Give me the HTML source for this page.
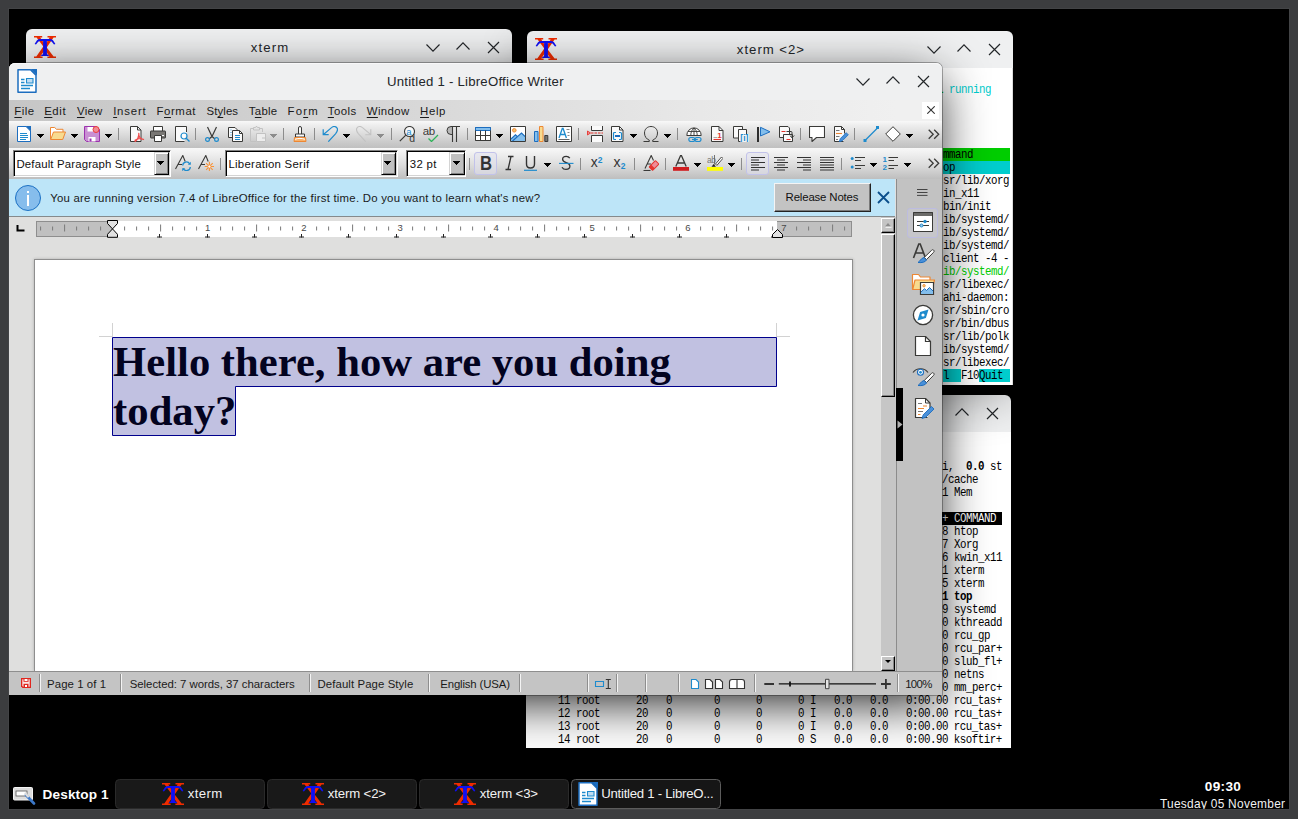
<!DOCTYPE html>
<html><head><meta charset="utf-8"><title>Desktop</title><style>
*{box-sizing:border-box;margin:0;padding:0}
html,body{width:1298px;height:819px;overflow:hidden;background:#3c3d3f}
body{font-family:"Liberation Sans",sans-serif;position:relative}
.abs{position:absolute}
#screen{position:absolute;left:9px;top:9px;width:1280px;height:800px;background:#000;overflow:hidden;box-shadow:0 0 0 1px #434446}
#root{position:absolute;left:-9px;top:-9px;width:1298px;height:819px}
.t{position:absolute;white-space:pre}
.t u{text-decoration:underline;text-underline-offset:1.500px;text-decoration-thickness:1px}
.tb{background:#eff0f1;border-radius:6px 6px 0 0}
.m{position:absolute;font:400 10.8px/13px 'Liberation Mono',monospace;letter-spacing:-.481px;white-space:pre;transform:translateY(.6px) scaleY(1.130);transform-origin:0 50%}
.mb{font-weight:700}
#lo{background:#dfdfdf;border-radius:6px 6px 0 0;box-shadow:0 0 0 1px rgba(0,0,0,.3),0 12px 50px -5px rgba(0,0,0,.9)}
.cb{background:#fff;border:1px solid;border-color:#808080 #fff #fff #808080;box-shadow:inset 1px 1px 0 #000,inset -1px -1px 0 #d4d4d4}
.cbb{background:#c0c0c0;border:1px solid;border-color:#d4d4d4 #000 #000 #d4d4d4;box-shadow:inset 1px 1px 0 #fff,inset -1px -1px 0 #808080}
.act{background:rgba(226,226,238,.55);border:1px solid #c2c2ea;border-radius:3px}
.act2{background:rgba(214,214,230,.22);border:1px solid #bcbce0;border-radius:3px}
.sbb{background:#c4c4c4;border:1px solid;border-color:#fff #000 #000 #fff;box-shadow:inset -1px -1px 0 #858585}
.tk{background:#191919;border:1px solid #2a2a2a;border-radius:4.500px}
.tka{background:#161616;border-color:#5c5c5c}
</style></head><body><div id="screen"><div id="root">
<!-- xterm 1 -->
<div class="abs tb" style="left:26px;top:29px;width:486px;height:37px"></div><svg class="abs" style="left:34.0px;top:36.0px" width="22" height="22" viewBox="0 0 22 22"><g fill="#f02c00"><path d="M0 0h8.2v1.6h-2l4.9 7.2 4.6-7.2h-2.2V0H22v1.6h-2.4l-6.9 9.9 6.9 8.9H22V22h-8.6v-1.6h2.1l-4.6-6.6-4.6 6.6h2.3V22H0v-1.6h2.3l7-9.8L2.6 1.6H0z"/></g><path fill="#1010f4" d="M.6 8L3 4.300Q4.400 3 6 3H16Q17.600 3 19 4.300L21.400 8 20 8.400 17.800 5.800Q17 5 15.800 5H12.900V17.600Q12.900 18.800 14.800 19V20H7.200V19Q9.100 18.800 9.100 17.600V5H6.200Q5 5 4.200 5.800L2 8.400Z"/></svg><span class="t" style="left:250.85px;top:41px;font:400 13.200px/1em 'Liberation Sans',sans-serif;color:#232629;letter-spacing:1.126px;">xterm</span><svg class="abs" style="left:0;top:0;overflow:visible" width="1" height="1"><g fill="none" stroke="#232629" stroke-width="1.15"><polyline points="426.5,44.5 433.0,51.1 439.5,44.5" /><polyline points="456.5,49.5 463.0,42.9 469.5,49.5" /><path d="M488.0 42.0L499.0 53.0M499.0 42.0L488.0 53.0"/></g></svg>
<!-- xterm 3 -->
<div class="abs tb" style="left:526px;top:395px;width:485px;height:37px"></div><svg class="abs" style="left:534.0px;top:402.0px" width="22" height="22" viewBox="0 0 22 22"><g fill="#f02c00"><path d="M0 0h8.2v1.6h-2l4.9 7.2 4.6-7.2h-2.2V0H22v1.6h-2.4l-6.9 9.9 6.9 8.9H22V22h-8.6v-1.6h2.1l-4.6-6.6-4.6 6.6h2.3V22H0v-1.6h2.3l7-9.8L2.6 1.6H0z"/></g><path fill="#1010f4" d="M.6 8L3 4.300Q4.400 3 6 3H16Q17.600 3 19 4.300L21.400 8 20 8.400 17.800 5.800Q17 5 15.800 5H12.900V17.600Q12.900 18.800 14.800 19V20H7.200V19Q9.100 18.800 9.100 17.600V5H6.200Q5 5 4.200 5.800L2 8.400Z"/></svg><svg class="abs" style="left:0;top:0;overflow:visible" width="1" height="1"><g fill="none" stroke="#232629" stroke-width="1.15"><polyline points="925.5,410.5 932.0,417.1 938.5,410.5" /><polyline points="955.5,415.5 962.0,408.9 968.5,415.5" /><path d="M987.0 408.0L998.0 419.0M998.0 408.0L987.0 419.0"/></g></svg><div class="abs" style="left:526px;top:432px;width:485px;height:316px;background:#fff"></div><span class="m" style="left:942px;top:460px;color:#000">i,</span><span class="m mb" style="left:966px;top:460px;color:#000">0.0</span><span class="m" style="left:990px;top:460px;color:#000">st</span><span class="m" style="left:942px;top:473px;color:#000">/cache</span><span class="m" style="left:942px;top:486px;color:#000">1 Mem</span><div class="abs" style="left:942px;top:512px;width:60px;height:13px;background:#000"></div><span class="m" style="left:942px;top:512px;color:#fff">+ COMMAND</span><span class="m" style="left:942px;top:525px;color:#000">8 htop</span><span class="m" style="left:942px;top:538px;color:#000">7 Xorg</span><span class="m" style="left:942px;top:551px;color:#000">6 kwin_x11</span><span class="m" style="left:942px;top:564px;color:#000">1 xterm</span><span class="m" style="left:942px;top:577px;color:#000">5 xterm</span><span class="m mb" style="left:942px;top:590px;color:#000">1 top</span><span class="m" style="left:942px;top:603px;color:#000">9 systemd</span><span class="m" style="left:942px;top:616px;color:#000">0 kthreadd</span><span class="m" style="left:942px;top:629px;color:#000">0 rcu_gp</span><span class="m" style="left:942px;top:642px;color:#000">0 rcu_par+</span><span class="m" style="left:942px;top:655px;color:#000">0 slub_fl+</span><span class="m" style="left:942px;top:668px;color:#000">0 netns</span><span class="m" style="left:942px;top:681px;color:#000">0 mm_perc+</span><span class="m" style="left:528px;top:694px;color:#000">     11 root      20   0       0      0      0 I   0.0   0.0   0:00.00 rcu_tas+</span><span class="m" style="left:528px;top:707px;color:#000">     12 root      20   0       0      0      0 I   0.0   0.0   0:00.00 rcu_tas+</span><span class="m" style="left:528px;top:720px;color:#000">     13 root      20   0       0      0      0 I   0.0   0.0   0:00.00 rcu_tas+</span><span class="m" style="left:528px;top:733px;color:#000">     14 root      20   0       0      0      0 S   0.0   0.0   0:00.90 ksoftir+</span>
<!-- xterm 2 -->
<div class="abs" style="left:527px;top:31px;width:486px;height:354px;border-radius:6px 6px 0 0;box-shadow:0 12px 50px -5px rgba(0,0,0,.45)"></div><div class="abs tb" style="left:527px;top:31px;width:486px;height:37px"></div><svg class="abs" style="left:535.0px;top:38.0px" width="22" height="22" viewBox="0 0 22 22"><g fill="#f02c00"><path d="M0 0h8.2v1.6h-2l4.9 7.2 4.6-7.2h-2.2V0H22v1.6h-2.4l-6.9 9.9 6.9 8.9H22V22h-8.6v-1.6h2.1l-4.6-6.6-4.6 6.6h2.3V22H0v-1.6h2.3l7-9.8L2.6 1.6H0z"/></g><path fill="#1010f4" d="M.6 8L3 4.300Q4.400 3 6 3H16Q17.600 3 19 4.300L21.400 8 20 8.400 17.800 5.800Q17 5 15.800 5H12.900V17.600Q12.900 18.800 14.800 19V20H7.200V19Q9.100 18.800 9.100 17.600V5H6.200Q5 5 4.200 5.800L2 8.400Z"/></svg><span class="t" style="left:736.85px;top:43px;font:400 13.200px/1em 'Liberation Sans',sans-serif;color:#232629;letter-spacing:0.982px;">xterm &lt;2&gt;</span><svg class="abs" style="left:0;top:0;overflow:visible" width="1" height="1"><g fill="none" stroke="#232629" stroke-width="1.15"><polyline points="927.5,46.5 934.0,53.1 940.5,46.5" /><polyline points="957.5,51.5 964.0,44.9 970.5,51.5" /><path d="M989.0 44.0L1000.0 55.0M1000.0 44.0L989.0 55.0"/></g></svg><div class="abs" style="left:527px;top:68px;width:486px;height:317px;background:#fff;border-right:1px solid #dcdcdc"></div><span class="m mb" style="left:937px;top:83px;color:#00cd00">1</span><span class="m" style="left:949px;top:83px;color:#00cdcd">running</span><div class="abs" style="left:943px;top:148px;width:67px;height:13px;background:#00cd00"></div><span class="m" style="left:943px;top:148px;color:#000">mmand</span><div class="abs" style="left:943px;top:161px;width:67px;height:13px;background:#00cdcd"></div><span class="m" style="left:943px;top:161px;color:#000">op</span><span class="m" style="left:943px;top:174px;color:#000">sr/lib/xorg</span><span class="m" style="left:943px;top:187px;color:#000">in_x11</span><span class="m" style="left:943px;top:200px;color:#000">bin/init</span><span class="m" style="left:943px;top:213px;color:#000">ib/systemd/</span><span class="m" style="left:943px;top:226px;color:#000">ib/systemd/</span><span class="m" style="left:943px;top:239px;color:#000">ib/systemd/</span><span class="m" style="left:943px;top:252px;color:#000">client -4 -</span><span class="m" style="left:943px;top:265px;color:#00cd00">ib/systemd/</span><span class="m" style="left:943px;top:278px;color:#000">sr/libexec/</span><span class="m" style="left:943px;top:291px;color:#000">ahi-daemon:</span><span class="m" style="left:943px;top:304px;color:#000">sr/sbin/cro</span><span class="m" style="left:943px;top:317px;color:#000">sr/bin/dbus</span><span class="m" style="left:943px;top:330px;color:#000">sr/lib/polk</span><span class="m" style="left:943px;top:343px;color:#000">ib/systemd/</span><span class="m" style="left:943px;top:356px;color:#000">sr/libexec/</span><div class="abs" style="left:943px;top:369px;width:18px;height:13px;background:#00cdcd"></div><span class="m" style="left:943px;top:369px;color:#000">l</span><span class="m" style="left:961px;top:369px;color:#000">F10</span><div class="abs" style="left:979px;top:369px;width:31px;height:13px;background:#00cdcd"></div><span class="m" style="left:979px;top:369px;color:#000">Quit</span>
<!-- LibreOffice -->
<div class="abs" id="lo" style="left:9.400px;top:63px;width:932.600px;height:632px"></div><div class="abs" style="left:9.400px;top:63px;width:932.600px;height:37px;background:#eff0f1;border-radius:6px 6px 0 0;box-shadow:inset 0 1px 0 #f8f8f9"></div><svg class="abs" style="left:17.0px;top:69.0px" width="20" height="24" viewBox="0 0 20 24"><path d="M1 .8h12.500l5.500 5.500v16.900h-18z" fill="#fff" stroke="#1c6dbf" stroke-width="1.500" stroke-linejoin="round"/><path d="M13.500 0h6.500v6.500z" fill="#1c6dbf"/><path d="M4 10.500h3.500M4 13.500h3.500M4 16.500h12M4 19.500h9" stroke="#1e8bcd" stroke-width="1.300"/><path d="M9.500 9.500h6.500v4.500h-6.500z" fill="#bfdcf3" stroke="#1e8bcd" stroke-width="1.100"/></svg><span class="t" style="left:386.98px;top:75px;font:400 13.200px/1em 'Liberation Sans',sans-serif;color:#232629;letter-spacing:0.234px;">Untitled 1 - LibreOffice Writer</span><svg class="abs" style="left:0;top:0;overflow:visible" width="1" height="1"><g fill="none" stroke="#232629" stroke-width="1.15"><polyline points="856.5,78.5 863.0,85.1 869.5,78.5" /><polyline points="886.5,83.5 893.0,76.9 899.5,83.5" /><path d="M918.0 76.0L929.0 87.0M929.0 76.0L918.0 87.0"/></g></svg><div class="abs" style="left:9.400px;top:100px;width:932.600px;height:21px;background:linear-gradient(90deg,#c6c6c6 0%,#cfcfcf 25%,#d9d9d9 46%,#e8e8e8 74%,#f0f0f0 95%)"></div><span class="t" style="left:14.37px;top:106px;font:400 11.400px/1em 'Liberation Sans',sans-serif;color:#1a1a1a;letter-spacing:0.457px;"><u>F</u>ile</span><span class="t" style="left:44.17px;top:106px;font:400 11.400px/1em 'Liberation Sans',sans-serif;color:#1a1a1a;letter-spacing:0.591px;"><u>E</u>dit</span><span class="t" style="left:76.95px;top:106px;font:400 11.400px/1em 'Liberation Sans',sans-serif;color:#1a1a1a;letter-spacing:0.304px;"><u>V</u>iew</span><span class="t" style="left:113.15px;top:106px;font:400 11.400px/1em 'Liberation Sans',sans-serif;color:#1a1a1a;letter-spacing:0.803px;"><u>I</u>nsert</span><span class="t" style="left:156.47px;top:106px;font:400 11.400px/1em 'Liberation Sans',sans-serif;color:#1a1a1a;letter-spacing:0.582px;">F<u>o</u>rmat</span><span class="t" style="left:206.49px;top:106px;font:400 11.400px/1em 'Liberation Sans',sans-serif;color:#1a1a1a;letter-spacing:0.096px;">St<u>y</u>les</span><span class="t" style="left:248.85px;top:106px;font:400 11.400px/1em 'Liberation Sans',sans-serif;color:#1a1a1a;letter-spacing:0.277px;">T<u>a</u>ble</span><span class="t" style="left:287.57px;top:106px;font:400 11.400px/1em 'Liberation Sans',sans-serif;color:#1a1a1a;letter-spacing:1.160px;">Fo<u>r</u>m</span><span class="t" style="left:327.75px;top:106px;font:400 11.400px/1em 'Liberation Sans',sans-serif;color:#1a1a1a;letter-spacing:0.488px;"><u>T</u>ools</span><span class="t" style="left:366.75px;top:106px;font:400 11.400px/1em 'Liberation Sans',sans-serif;color:#1a1a1a;letter-spacing:0.375px;"><u>W</u>indow</span><span class="t" style="left:420.07px;top:106px;font:400 11.400px/1em 'Liberation Sans',sans-serif;color:#1a1a1a;letter-spacing:0.651px;"><u>H</u>elp</span><div class="abs" style="left:922px;top:102px;width:17px;height:17px;background:#fff"></div><svg class="abs" style="left:927px;top:106px" width="8" height="8" viewBox="0 0 8 8"><path d="M.3 .3l7.400 7.400M7.700 .3L.3 7.700" stroke="#333" stroke-width="1.100"/></svg><div class="abs" style="left:9.400px;top:121px;width:932.600px;height:27px;background:linear-gradient(#f8f8f8 0%,#eeeeee 15%,#dedede 45%,#cbcbcb 78%,#c0c0c0 100%)"></div><svg class="abs" style="left:16.0px;top:126.0px" width="16" height="16" viewBox="0 0 16 16"><path d="M1.5.5h8.500l4.500 4.500v10.500h-13z" fill="#fff" stroke="#1c6dbf"/><path d="M9.500 0h5.500v5.500z" fill="#1c6dbf"/><path d="M4 7.500h7M4 9.500h8M4 11.500h8M4 13.500h6" stroke="#1e8bcd" stroke-width="1"/></svg><svg class="abs" style="left:37.0px;top:134.0px" width="7" height="4" viewBox="0 0 7 4"><path d="M0 0h7v1h-1v1h-1v1h-1v1h-1v-1h-1v-1h-1v-1h-1z" fill="#000" shape-rendering="crispEdges"/></svg><svg class="abs" style="left:50.0px;top:126.0px" width="16" height="16" viewBox="0 0 16 16"><path d="M.5 13.500v-12h4.200l1.800 1.800h6.500v2.700" fill="#fff" stroke="#ed8733"/><path d="M.7 13.500l2.800-7.500h12l-2.800 7.500z" fill="#f8db8f" stroke="#ed8733" stroke-linejoin="round"/></svg><svg class="abs" style="left:71.0px;top:134.0px" width="7" height="4" viewBox="0 0 7 4"><path d="M0 0h7v1h-1v1h-1v1h-1v1h-1v-1h-1v-1h-1v-1h-1z" fill="#000" shape-rendering="crispEdges"/></svg><svg class="abs" style="left:84.0px;top:126.0px" width="16" height="16" viewBox="0 0 16 16"><path d="M.5.500h12l3 3v12h-13l-2-2z" fill="#c98fd3" stroke="#9b33ae" stroke-linejoin="round"/><path d="M3.500 1h7v4.500h-7z" fill="#fff"/><path d="M4.500 11h7v4.500h-7z" fill="#fff"/><path d="M5.500 12.500h2v3h-2z" fill="#9b33ae"/><circle cx="12" cy="3.500" r="3" fill="#f08d97" stroke="#ed3d3b"/></svg><svg class="abs" style="left:105.0px;top:134.0px" width="7" height="4" viewBox="0 0 7 4"><path d="M0 0h7v1h-1v1h-1v1h-1v1h-1v-1h-1v-1h-1v-1h-1z" fill="#000" shape-rendering="crispEdges"/></svg><div class="abs" style="left:118.0px;top:128.0px;width:1px;height:12.0px;background:#8c8c8c"></div><svg class="abs" style="left:128.5px;top:126.0px" width="16" height="16" viewBox="0 0 16 16"><path d="M1.500.5h7l3.500 3.500v11.500h-10.500z" fill="#fafafa" stroke="#3a3a38" stroke-linejoin="round"/><path d="M8.500.5v3.500h3.500" fill="none" stroke="#3a3a38"/><path d="M9.800 7.500c.4 2.500-.8 5.500-3.600 8M9.800 7.500c-.3 3 1.500 5 4.700 6M6 14.200c2.500-1.700 5.500-2 8.300-.9" fill="none" stroke="#ee4d4d" stroke-width="1.300" stroke-linecap="round"/></svg><svg class="abs" style="left:150.0px;top:126.0px" width="16" height="16" viewBox="0 0 16 16"><path d="M3.500 5v-4.500h9v4.500" fill="#fff" stroke="#3a3a38"/><path d="M1 5h14q.5 0 .5.500v6q0 .5-.5.500h-14q-.5 0-.5-.5v-6q0-.5.500-.5z" fill="#797774" stroke="#3a3a38"/><path d="M.5 5.500h15v2h-15z" fill="#fff" opacity=".0"/><path d="M4.500 9.500h7v6h-7z" fill="#fff" stroke="#3a3a38"/><path d="M12 9h2v1h-2z" fill="#fff"/></svg><svg class="abs" style="left:174.5px;top:126.0px" width="16" height="16" viewBox="0 0 16 16"><path d="M11.500 6v-5.500h-11v15h9" fill="#fafafa" stroke="#3a3a38" stroke-linejoin="round"/><circle cx="9" cy="10" r="3" fill="#fff" fill-opacity=".6" stroke="#1e8bcd" stroke-width="1.200"/><path d="M11.200 12.200l3.300 3.300" stroke="#1e8bcd" stroke-width="1.300"/></svg><div class="abs" style="left:195.0px;top:128.0px;width:1px;height:12.0px;background:#8c8c8c"></div><svg class="abs" style="left:204.0px;top:126.0px" width="16" height="16" viewBox="0 0 16 16"><path d="M3.500 1l4.500 9.500M12.500 1l-4.500 9.500M8 10.500l-3 2.500M8 10.500l3 2.500" fill="none" stroke="#3a3a38" stroke-width="1.200"/><circle cx="3.500" cy="13.500" r="1.900" fill="none" stroke="#1e8bcd" stroke-width="1.200"/><circle cx="12.500" cy="13.500" r="1.900" fill="none" stroke="#1e8bcd" stroke-width="1.200"/></svg><svg class="abs" style="left:227.5px;top:126.0px" width="16" height="16" viewBox="0 0 16 16"><path d="M.5 1.500h6.500l2 2v8h-8.500z" fill="#fafafa" stroke="#3a3a38" stroke-linejoin="round"/><path d="M2.500 4h1M2.500 6.500h1M2.500 9h1" stroke="#1e8bcd"/><path d="M4.500 4.500h7l3 3v8h-10z" fill="#fafafa" stroke="#3a3a38" stroke-linejoin="round"/><path d="M11.500 4.500v3h3" fill="none" stroke="#3a3a38"/><path d="M7 9.500h5M7 11.500h5M7 13.500h5" stroke="#1e8bcd"/></svg><svg class="abs" style="left:250.0px;top:126.0px" width="16" height="16" viewBox="0 0 16 16"><path d="M3.500 2.500h-3v13h6M12.500 6v-3.500h-3" fill="none" stroke="#c2c2c2"/><path d="M3.500 1.500h2l.5-1h1l.5 1h2v2.500h-6z" fill="#e4e4e4" stroke="#c2c2c2"/><path d="M6.500 7.500h9v8h-9z" fill="#ededed" stroke="#c2c2c2"/><path d="M12 12h3.500v3.500" fill="none" stroke="#c2c2c2"/></svg><svg class="abs" style="left:270.0px;top:134.0px" width="7" height="4" viewBox="0 0 7 4"><path d="M0 0h7v1h-1v1h-1v1h-1v1h-1v-1h-1v-1h-1v-1h-1z" fill="#8c8c8c" shape-rendering="crispEdges"/></svg><div class="abs" style="left:283.0px;top:128.0px;width:1px;height:12.0px;background:#8c8c8c"></div><svg class="abs" style="left:291.5px;top:126.0px" width="16" height="16" viewBox="0 0 16 16"><path d="M6.500 8v-6q0-1.500 1.500-1.500t1.500 1.500v6" fill="#fafafa" stroke="#3a3a38"/><path d="M3.500 8h9v3h-9z" fill="#fafafa" stroke="#3a3a38"/><path d="M2.500 11.500h11l.5 4h-12z" fill="#f8b26b" stroke="#ed8733" stroke-linejoin="round"/><path d="M3 13.300c3-1.200 7-1.200 10 0" stroke="#fff" fill="none"/></svg><div class="abs" style="left:314.0px;top:128.0px;width:1px;height:12.0px;background:#8c8c8c"></div><svg class="abs" style="left:322.0px;top:126.0px" width="16" height="16" viewBox="0 0 16 16"><path d="M1.2 3.2V8.7H6.700M1.200 8.700L9.500 1.600C11.500-.2 14.500.3 15.300 2.500C16 4.500 15.200 5.800 13.500 7.800L6.300 15.700" fill="none" stroke="#1e8bcd" stroke-width="1.200"/></svg><svg class="abs" style="left:343.0px;top:134.0px" width="7" height="4" viewBox="0 0 7 4"><path d="M0 0h7v1h-1v1h-1v1h-1v1h-1v-1h-1v-1h-1v-1h-1z" fill="#000" shape-rendering="crispEdges"/></svg><svg class="abs" style="left:356.0px;top:126.0px" width="16" height="16" viewBox="0 0 16 16"><g transform="translate(16 0) scale(-1 1)"><path d="M1.2 3.2V8.7H6.700M1.200 8.700L9.500 1.600C11.500-.2 14.500.3 15.300 2.500C16 4.500 15.200 5.800 13.500 7.800L6.300 15.700" fill="none" stroke="#c2c2c2" stroke-width="1.100"/></g></svg><svg class="abs" style="left:377.0px;top:134.0px" width="7" height="4" viewBox="0 0 7 4"><path d="M0 0h7v1h-1v1h-1v1h-1v1h-1v-1h-1v-1h-1v-1h-1z" fill="#8c8c8c" shape-rendering="crispEdges"/></svg><div class="abs" style="left:390.5px;top:128.0px;width:1px;height:12.0px;background:#8c8c8c"></div><svg class="abs" style="left:399.0px;top:126.0px" width="16" height="16" viewBox="0 0 16 16"><circle cx="10.500" cy="5.500" r="5" fill="#fff" fill-opacity=".7" stroke="#3a3a38" stroke-width="1.100"/><path d="M6.800 9.200L.8 15.200" stroke="#3a3a38" stroke-width="1.200"/><text x="7.300" y="9" font-family="Liberation Sans" font-size="9.500" fill="#1e8bcd">a</text><text x="10.300" y="16" font-family="Liberation Sans" font-size="10.500" fill="#3a3a38">d</text></svg><svg class="abs" style="left:423.0px;top:126.0px" width="16" height="16" viewBox="0 0 16 16"><text x="-.3" y="9.400" font-family="Liberation Sans" font-size="11.500" fill="#3a3a38" letter-spacing="-.3">ab</text><path d="M5.500 12.500l3 3 6.500-6.500" fill="none" stroke="#2fb35a" stroke-width="1.300"/></svg><svg class="abs" style="left:446.0px;top:126.0px" width="16" height="16" viewBox="0 0 16 16"><path d="M6.500.5v8h-1.500a4 4 0 0 1 0-8z" fill="#b9b9b9" stroke="#3a3a38"/><path d="M5 .5h9M6.500 .5v15.500M10.500 .5v15.500" fill="none" stroke="#3a3a38" stroke-width="1.100"/></svg><div class="abs" style="left:467.0px;top:128.0px;width:1px;height:12.0px;background:#8c8c8c"></div><svg class="abs" style="left:475.0px;top:126.0px" width="16" height="16" viewBox="0 0 16 16"><path d="M.5 1.500h15v13h-15z" fill="#fff" stroke="#3a3a38"/><path d="M.5 1.500h15v3h-15z" fill="#83beec" stroke="#1c6dbf"/><path d="M.5 9.500h15M5.500 4.500v10M10.500 4.500v10M.5 4.500v10M15.500 4.500v10" stroke="#3a3a38" fill="none"/></svg><svg class="abs" style="left:496.0px;top:134.0px" width="7" height="4" viewBox="0 0 7 4"><path d="M0 0h7v1h-1v1h-1v1h-1v1h-1v-1h-1v-1h-1v-1h-1z" fill="#000" shape-rendering="crispEdges"/></svg><svg class="abs" style="left:510.0px;top:126.0px" width="16" height="16" viewBox="0 0 16 16"><path d="M.5.5h15v15h-15z" fill="#fff" stroke="#3a3a38"/><circle cx="4.300" cy="4.300" r="1.800" fill="#f8c16b" stroke="#ed8733" stroke-width=".9"/><path d="M1 15l0-2 4.500-4.200 2.200 2 3.800-3.800 3.500 3.500v4.500z" fill="#83beec"/><path d="M1 13l4.500-4.200 2.200 2M2.500 15l9-8 3.500 3.500" fill="none" stroke="#1c6dbf" stroke-width="1.100"/></svg><svg class="abs" style="left:533.5px;top:126.0px" width="16" height="16" viewBox="0 0 16 16"><path d="M.5 5.500h3.500v10h-3.500z" fill="#83beec" stroke="#1c6dbf"/><path d="M5.500.5h3.500v15h-3.500z" fill="#f8db8f" stroke="#ed8733"/><path d="M10.800 9.500h3v6h-3z" fill="#797774" stroke="#3a3a38"/></svg><svg class="abs" style="left:556.0px;top:126.0px" width="16" height="16" viewBox="0 0 16 16"><path d="M.5.5h15v15h-15z" fill="#fff" stroke="#3a3a38"/><path d="M3 12l3.300-9.500h.8l3.300 9.500M4.300 8.500h4.800" fill="none" stroke="#1e8bcd" stroke-width="1.300"/><path d="M10.500 3.500h3M11.500 6.500h2M11.500 9.500h2" stroke="#888"/><path d="M2.500 13.500h11" stroke="#666"/></svg><div class="abs" style="left:578.0px;top:128.0px;width:1px;height:12.0px;background:#8c8c8c"></div><svg class="abs" style="left:587.0px;top:126.0px" width="16" height="16" viewBox="0 0 16 16"><path d="M4.500 0v4.500h11v-4.500M4.500 16v-6.500h11v6.500" fill="#fafafa" stroke="#3a3a38"/><path d="M4 7h12" stroke="#e5352f" stroke-width="1.100" stroke-dasharray="2.500 1"/><path d="M.5 5v4l3-2z" fill="#f08d97" stroke="#e5352f" stroke-width=".9"/></svg><svg class="abs" style="left:611.0px;top:126.0px" width="16" height="16" viewBox="0 0 16 16"><path d="M.5.5h8l3.500 3.500v11.500h-11.500z" fill="#fafafa" stroke="#3a3a38" stroke-linejoin="round"/><path d="M8.500.5v3.500h3.500" fill="none" stroke="#3a3a38"/><path d="M5 6.500h-1.500q-1 0-1 1v5q0 1 1 1h1.500M8 6.500h1.500q1 0 1 1v5q0 1-1 1h-1.500" fill="none" stroke="#1e8bcd" stroke-width="1.200"/><path d="M4 10h5" stroke="#1c6dbf" stroke-width="2"/></svg><svg class="abs" style="left:630.0px;top:134.0px" width="7" height="4" viewBox="0 0 7 4"><path d="M0 0h7v1h-1v1h-1v1h-1v1h-1v-1h-1v-1h-1v-1h-1z" fill="#000" shape-rendering="crispEdges"/></svg><svg class="abs" style="left:643.3px;top:126.0px" width="16" height="16" viewBox="0 0 16 16"><path d="M.5 15.500h5.800v-1.300c-2.900-1.200-4.800-3.800-4.800-7.200 0-3.900 2.800-6.500 6.500-6.500s6.500 2.600 6.500 6.500c0 3.400-1.900 6-4.800 7.200v1.300h5.800" fill="none" stroke="#3a3a38" stroke-width="1"/></svg><svg class="abs" style="left:664.0px;top:134.0px" width="7" height="4" viewBox="0 0 7 4"><path d="M0 0h7v1h-1v1h-1v1h-1v1h-1v-1h-1v-1h-1v-1h-1z" fill="#000" shape-rendering="crispEdges"/></svg><div class="abs" style="left:677.0px;top:128.0px;width:1px;height:12.0px;background:#8c8c8c"></div><svg class="abs" style="left:686.0px;top:126.0px" width="16" height="16" viewBox="0 0 16 16"><path d="M.8 9.500a7.200 7.600 0 0 1 14.400 0z" fill="#fff" stroke="#3a3a38" stroke-width="1"/><path d="M8 2v7.500M2 5.500h12M4.800 9.500c0-3 .9-5.800 3.200-7.500M11.200 9.500c0-3-.9-5.800-3.200-7.500" fill="none" stroke="#3a3a38" stroke-width=".9"/><rect x="2.800" y="11.500" width="6.200" height="4" rx="1.900" fill="none" stroke="#1e8bcd" stroke-width="1.200"/><rect x="8.800" y="11.500" width="6.200" height="4" rx="1.900" fill="none" stroke="#1e8bcd" stroke-width="1.200"/><path d="M6 13.500h5.800" stroke="#1e8bcd" stroke-width="1.200"/></svg><svg class="abs" style="left:710.8px;top:126.0px" width="16" height="16" viewBox="0 0 16 16"><path d="M.5.5h7.500l4 4v11h-11.500z" fill="#fafafa" stroke="#3a3a38" stroke-linejoin="round"/><path d="M8 .5v4h4" fill="none" stroke="#3a3a38"/><path d="M2.500 11.500h3.500" stroke="#aaa"/><path d="M2.500 13.500h7.500" stroke="#e5352f" stroke-width="1.100"/><text x="6.200" y="12" font-family="Liberation Sans" font-weight="700" font-size="8" fill="#e5352f">1</text></svg><svg class="abs" style="left:732.5px;top:126.0px" width="16" height="16" viewBox="0 0 16 16"><path d="M.5.5h9v11.500h-9z" fill="#fafafa" stroke="#3a3a38" stroke-linejoin="round"/><path d="M5.500 3.500h8v12h-8z" fill="#fafafa" stroke="#3a3a38" stroke-linejoin="round"/><path d="M7.500 8h8.500v8h-8.500z" fill="#f4f4f4"/><text x="7.300" y="15.300" font-family="Liberation Sans" font-weight="700" font-size="8.500" fill="#1e8bcd">[i]</text></svg><svg class="abs" style="left:757.0px;top:126.0px" width="16" height="16" viewBox="0 0 16 16"><path d="M1 1v15" stroke="#2d2d2d" stroke-width="2"/><path d="M3.500 1.300l9.500 4.500-9.500 4.200z" fill="#83beec" stroke="#1c6dbf" stroke-linejoin="round"/></svg><svg class="abs" style="left:778.5px;top:126.0px" width="16" height="16" viewBox="0 0 16 16"><path d="M.5.5h8.500l1.500 1.500v9.500h-10z" fill="#fafafa" stroke="#3a3a38" stroke-linejoin="round"/><path d="M4.500 8.500h9v7h-9z" fill="#fafafa" stroke="#3a3a38" stroke-linejoin="round"/><path d="M2.500 5.500h4M7.500 13.500h4" stroke="#e5352f" stroke-width="1.100"/><path d="M7.500 5.500h4.500q1 0 1 1v5M10.800 9.500l2.200 2.200 2.200-2.200" fill="none" stroke="#3a3a38"/></svg><div class="abs" style="left:800.0px;top:128.0px;width:1px;height:12.0px;background:#8c8c8c"></div><svg class="abs" style="left:809.0px;top:126.0px" width="16" height="16" viewBox="0 0 16 16"><path d="M.5.5h15v11h-8l-4.500 4v-4h-2.500z" fill="#fff" stroke="#3a3a38" stroke-linejoin="round" stroke-width="1.100"/></svg><svg class="abs" style="left:833.3px;top:126.0px" width="16" height="16" viewBox="0 0 16 16"><path d="M10.500 15.500h-9v-15h7l3 3v4" fill="#fafafa" stroke="#3a3a38" stroke-linejoin="round"/><path d="M8.500.5v3h3" fill="none" stroke="#3a3a38"/><path d="M3 4.500h3.500M3 10.500h3.500M3 13.500h2" stroke="#777"/><path d="M3 7.500h6" stroke="#ed8733" stroke-width="1.100"/><path d="M6.300 15.700l.9-3 6-6 2.100 2.100-6 6z" fill="#4a90d9" stroke="#1c6dbf" stroke-width=".8" stroke-linejoin="round"/></svg><div class="abs" style="left:854.0px;top:128.0px;width:1px;height:12.0px;background:#8c8c8c"></div><svg class="abs" style="left:863.0px;top:126.0px" width="16" height="16" viewBox="0 0 16 16"><path d="M2 14.500l13-13" stroke="#1e8bcd" stroke-width="1.200"/><path d="M.5 13h3v3h-3zM13 0h3v3h-3z" fill="#1e8bcd"/></svg><svg class="abs" style="left:885.0px;top:126.0px" width="16" height="16" viewBox="0 0 16 16"><path d="M8 .7l7.300 7.300-7.300 7.300-7.300-7.300z" fill="#fff" stroke="#3a3a38" stroke-width="1"/></svg><svg class="abs" style="left:906.0px;top:134.0px" width="7" height="4" viewBox="0 0 7 4"><path d="M0 0h7v1h-1v1h-1v1h-1v1h-1v-1h-1v-1h-1v-1h-1z" fill="#000" shape-rendering="crispEdges"/></svg><svg class="abs" style="left:928.0px;top:128.8px" width="12" height="11" viewBox="0 0 12 11"><path d="M.7 .7l4.500 4.500-4.500 4.500M6.200 .7l4.500 4.500-4.500 4.500" fill="none" stroke="#3a3a38" stroke-width="1.300"/></svg><div class="abs" style="left:9.400px;top:148px;width:932.600px;height:31px;background:linear-gradient(#f8f8f8 0%,#ececec 25%,#dcdcdc 55%,#c8c8c8 85%,#bebebe 100%)"></div><div class="abs cb" style="left:13.0px;top:150.0px;width:157.5px;height:26.5px"></div><div class="abs cbb" style="left:153.5px;top:152.0px;width:15.5px;height:23.0px"></div><svg class="abs" style="left:157.0px;top:161.0px" width="7" height="4" viewBox="0 0 7 4"><path d="M0 0h7v1h-1v1h-1v1h-1v1h-1v-1h-1v-1h-1v-1h-1z" fill="#000" shape-rendering="crispEdges"/></svg><span class="t" style="left:16.47px;top:159px;font:400 11.400px/1em 'Liberation Sans',sans-serif;color:#111;letter-spacing:0.155px;">Default Paragraph Style</span><svg class="abs" style="left:175.0px;top:155.0px" width="16" height="16" viewBox="0 0 16 16"><path d="M.5 14l7.300-13.500 2.400 6M3.300 9.500h3.700" fill="none" stroke="#3a3a38" stroke-width="1.100"/><path d="M7.700 10.500a3.700 3.700 0 0 1 7-1.500M15.300 12a3.700 3.700 0 0 1-7 1.500" fill="none" stroke="#1e8bcd" stroke-width="1.300"/><path d="M15.800 6.800v3h-3zM7.200 16.200v-3h3z" fill="#1e8bcd"/></svg><svg class="abs" style="left:198.0px;top:155.0px" width="16" height="16" viewBox="0 0 16 16"><path d="M.5 14l7.300-13.500 2.400 6M3.300 9.500h3.700" fill="none" stroke="#3a3a38" stroke-width="1.100"/><g stroke="#f8943a" stroke-width="1.100"><path d="M11.400 6.800v9.400M6.700 11.500h9.400M8.100 8.200l6.600 6.600M14.700 8.200l-6.600 6.600"/></g><circle cx="11.400" cy="11.500" r="1.500" fill="#fff" stroke="#f8943a" stroke-width=".8"/></svg><div class="abs" style="left:220.0px;top:157.5px;width:1px;height:12.0px;background:#8c8c8c"></div><div class="abs cb" style="left:224.7px;top:150.0px;width:173.0px;height:26.5px"></div><div class="abs cbb" style="left:380.7px;top:152.0px;width:15.5px;height:23.0px"></div><svg class="abs" style="left:384.0px;top:161.0px" width="7" height="4" viewBox="0 0 7 4"><path d="M0 0h7v1h-1v1h-1v1h-1v1h-1v-1h-1v-1h-1v-1h-1z" fill="#000" shape-rendering="crispEdges"/></svg><span class="t" style="left:228.47px;top:159px;font:400 11.400px/1em 'Liberation Sans',sans-serif;color:#111;letter-spacing:0.269px;">Liberation Serif</span><div class="abs cb" style="left:405.6px;top:150.0px;width:60.8px;height:26.5px"></div><div class="abs cbb" style="left:449.4px;top:152.0px;width:15.5px;height:23.0px"></div><svg class="abs" style="left:453.0px;top:161.0px" width="7" height="4" viewBox="0 0 7 4"><path d="M0 0h7v1h-1v1h-1v1h-1v1h-1v-1h-1v-1h-1v-1h-1z" fill="#000" shape-rendering="crispEdges"/></svg><span class="t" style="left:409.87px;top:159px;font:400 11.400px/1em 'Liberation Sans',sans-serif;color:#111;letter-spacing:0.290px;">32 pt</span><div class="abs" style="left:469.1px;top:157.5px;width:1px;height:12.0px;background:#8c8c8c"></div><div class="abs act" style="left:474px;top:152px;width:23px;height:23px"></div><span class="t" style="left:479.72px;top:154px;font:700 19.400px/1em 'Liberation Sans',sans-serif;color:#333;transform:scaleX(.86);transform-origin:0 0;">B</span><svg class="abs" style="left:505px;top:155px" width="9" height="16" viewBox="0 0 9 16"><path d="M3 1.500h5.500M.5 14.500h5.500M6 1.500l-3 13" stroke="#333" stroke-width="1.300" fill="none"/></svg><svg class="abs" style="left:523px;top:155px" width="15" height="16" viewBox="0 0 15 16"><path d="M3.500 1v8c0 2.500 1.500 4 4 4s4-1.500 4-4v-8" stroke="#333" stroke-width="1.400" fill="none"/><path d="M1 15.300h13" stroke="#1e8bcd" stroke-width="1.200"/></svg><svg class="abs" style="left:544.0px;top:163.0px" width="7" height="4" viewBox="0 0 7 4"><path d="M0 0h7v1h-1v1h-1v1h-1v1h-1v-1h-1v-1h-1v-1h-1z" fill="#000" shape-rendering="crispEdges"/></svg><svg class="abs" style="left:558px;top:155px" width="16" height="16" viewBox="0 0 16 16"><path d="M11.800 3.200c-.8-1.200-2-1.900-3.600-1.900-2.200 0-3.600 1.200-3.600 3 0 4.200 7.300 2.500 7.300 6.800 0 2-1.500 3.300-3.900 3.300-1.800 0-3.200-.8-4-2.200" stroke="#333" stroke-width="1.300" fill="none"/><path d="M1 8.400h14.500" stroke="#1e8bcd" stroke-width="1.100"/></svg><div class="abs" style="left:580.0px;top:157.5px;width:1px;height:12.0px;background:#8c8c8c"></div><span class="t" style="left:590.65px;top:155px;font:400 14.000px/1em 'Liberation Sans',sans-serif;color:#333;">x</span><span class="t" style="left:597.71px;top:156px;font:700 8.500px/1em 'Liberation Sans',sans-serif;color:#1e8bcd;">2</span><span class="t" style="left:613.55px;top:155px;font:400 14.000px/1em 'Liberation Sans',sans-serif;color:#333;">x</span><span class="t" style="left:620.71px;top:162px;font:700 8.500px/1em 'Liberation Sans',sans-serif;color:#1e8bcd;">2</span><div class="abs" style="left:634.0px;top:157.5px;width:1px;height:12.0px;background:#8c8c8c"></div><svg class="abs" style="left:643.0px;top:155.0px" width="16" height="16" viewBox="0 0 16 16"><path d="M2 13.500l6.200-13 2.300 5M4.300 9h3.700" fill="none" stroke="#3a3a38" stroke-width="1.100"/><path d="M.5 15.500h7" stroke="#3a3a38" stroke-width="1.100"/><g transform="rotate(-45 11 10.500)"><rect x="6.500" y="8" width="9" height="5" rx=".8" fill="#f08d97" stroke="#e5352f"/><rect x="6.500" y="8" width="3" height="5" fill="#e5352f"/></g></svg><div class="abs" style="left:665.3px;top:157.5px;width:1px;height:12.0px;background:#8c8c8c"></div><svg class="abs" style="left:673.0px;top:155.0px" width="16" height="16" viewBox="0 0 16 16"><path d="M2.800 11.500l4.800-11h.8l4.800 11M4.500 8h7" fill="none" stroke="#3a3a38" stroke-width="1.300"/><path d="M0 12h16v3.800h-16z" fill="#d01c1f"/></svg><svg class="abs" style="left:694.0px;top:163.0px" width="7" height="4" viewBox="0 0 7 4"><path d="M0 0h7v1h-1v1h-1v1h-1v1h-1v-1h-1v-1h-1v-1h-1z" fill="#000" shape-rendering="crispEdges"/></svg><svg class="abs" style="left:707.0px;top:155.0px" width="16" height="16" viewBox="0 0 16 16"><text x="0" y="8" font-family="Liberation Sans" font-size="8.500" fill="#777" letter-spacing="-.4">ab</text><path d="M7.500 0v9.500" stroke="#666" stroke-width=".9"/><path d="M8.500 9l6-7 1.400 1.400-6 7z" fill="#fff" stroke="#3a3a38" stroke-width=".9"/><path d="M4.500 11.800l2.200-2.700 2.200 2.700z" fill="#222"/><path d="M0 12h16v3.800h-16z" fill="#ffff00"/></svg><svg class="abs" style="left:728.0px;top:163.0px" width="7" height="4" viewBox="0 0 7 4"><path d="M0 0h7v1h-1v1h-1v1h-1v1h-1v-1h-1v-1h-1v-1h-1z" fill="#000" shape-rendering="crispEdges"/></svg><div class="abs" style="left:741.0px;top:157.5px;width:1px;height:12.0px;background:#8c8c8c"></div><div class="abs act" style="left:746px;top:152px;width:23px;height:23px"></div><svg class="abs" style="left:750.0px;top:155.0px" width="16" height="16" viewBox="0 0 16 16"><path d="M1.0 2.50H15.0M1.0 5.00H9.0M1.0 7.50H15.0M1.0 10.00H9.0M1.0 12.50H15.0M1.0 15.00H9.0" stroke="#333" stroke-width="1.150"/></svg><svg class="abs" style="left:773.0px;top:155.0px" width="16" height="16" viewBox="0 0 16 16"><path d="M1.0 2.50H15.0M4.0 5.00H12.0M1.0 7.50H15.0M4.0 10.00H12.0M1.0 12.50H15.0M4.0 15.00H12.0" stroke="#333" stroke-width="1.150"/></svg><svg class="abs" style="left:796.0px;top:155.0px" width="16" height="16" viewBox="0 0 16 16"><path d="M1.0 2.50H15.0M7.0 5.00H15.0M1.0 7.50H15.0M7.0 10.00H15.0M1.0 12.50H15.0M7.0 15.00H15.0" stroke="#333" stroke-width="1.150"/></svg><svg class="abs" style="left:819.0px;top:155.0px" width="16" height="16" viewBox="0 0 16 16"><path d="M1.0 2.50H15.0M1.0 5.00H15.0M1.0 7.50H15.0M1.0 10.00H15.0M1.0 12.50H15.0M1.0 15.00H15.0" stroke="#333" stroke-width="1.150"/></svg><div class="abs" style="left:841.0px;top:157.5px;width:1px;height:12.0px;background:#8c8c8c"></div><svg class="abs" style="left:849.5px;top:155.0px" width="16" height="16" viewBox="0 0 16 16"><circle cx="2.200" cy="3.500" r="1.500" fill="#1e8bcd"/><circle cx="2.200" cy="12" r="1.500" fill="#1e8bcd"/><path d="M5 2.500h10M5 5.500h6M5 10.500h10M5 13.500h6" stroke="#3a3a38" stroke-width="1.050"/></svg><svg class="abs" style="left:870.0px;top:163.0px" width="7" height="4" viewBox="0 0 7 4"><path d="M0 0h7v1h-1v1h-1v1h-1v1h-1v-1h-1v-1h-1v-1h-1z" fill="#000" shape-rendering="crispEdges"/></svg><svg class="abs" style="left:883.3px;top:155.0px" width="16" height="16" viewBox="0 0 16 16"><text x="-.4" y="6.800" font-family="Liberation Sans" font-weight="700" font-size="8" fill="#1e8bcd">1</text><text x="-.4" y="15" font-family="Liberation Sans" font-weight="700" font-size="8" fill="#1e8bcd">2</text><path d="M5.500 2.500h9.500M5.500 5.500h5.500M5.500 10.500h9.500M5.500 13.500h5.500" stroke="#3a3a38" stroke-width="1.050"/></svg><svg class="abs" style="left:904.0px;top:163.0px" width="7" height="4" viewBox="0 0 7 4"><path d="M0 0h7v1h-1v1h-1v1h-1v1h-1v-1h-1v-1h-1v-1h-1z" fill="#000" shape-rendering="crispEdges"/></svg><svg class="abs" style="left:928.0px;top:157.8px" width="12" height="11" viewBox="0 0 12 11"><path d="M.7 .7l4.500 4.500-4.500 4.500M6.200 .7l4.500 4.500-4.500 4.500" fill="none" stroke="#3a3a38" stroke-width="1.300"/></svg>
<div class="abs" style="left:9.400px;top:179px;width:885.600px;height:38px;background:#bde5f8;border-bottom:1px solid #858a8c"></div><div class="abs" style="left:15px;top:185px;width:26px;height:26px;border-radius:50%;background:#86bdec;border:1.200px solid #1c71c4"></div><div class="abs" style="left:27px;top:190.500px;width:2px;height:2.500px;background:#fff"></div><div class="abs" style="left:27px;top:195px;width:2px;height:11px;background:#fff"></div><span class="t" style="left:50.15px;top:193px;font:400 11.400px/1em 'Liberation Sans',sans-serif;color:#1a1a1a;letter-spacing:0.238px;">You are running version 7.4 of LibreOffice for the first time. Do you want to learn what's new?</span><div class="abs" style="left:774px;top:183px;width:97px;height:29px;background:#c3c3c3;border:1px solid;border-color:#f4f4f4 #222 #222 #f4f4f4;box-shadow:inset -1px -1px 0 #7a7a7a"></div><span class="t" style="left:785.57px;top:192px;font:400 11.400px/1em 'Liberation Sans',sans-serif;color:#111;letter-spacing:-0.152px;">Release Notes</span><svg class="abs" style="left:877px;top:191px" width="13" height="13" viewBox="0 0 13 13"><path d="M1 1l11 11M12 1L1 12" stroke="#0b4f8c" stroke-width="1.800"/></svg><div class="abs" style="left:9.400px;top:217px;width:886.600px;height:454px;background:#dfdfde"></div><div class="abs" style="left:36px;top:221px;width:816px;height:16px;background:#fff"></div><div class="abs" style="left:36px;top:221px;width:77px;height:16px;background:#c0c0c0;border:1px solid #8e8e8e;border-right:0"></div><div class="abs" style="left:777.400px;top:221px;width:75px;height:16px;background:#c0c0c0;border:1px solid #8e8e8e;border-left:0"></div><svg class="abs" style="left:0;top:0;overflow:visible" width="1" height="1"><g stroke="#7a7a7a" stroke-width="1"><path d="M40.6 226.500v4"/><path d="M52.6 226.500v4"/><path d="M64.6 224.500v7"/><path d="M76.6 226.500v4"/><path d="M88.6 226.500v4"/><path d="M100.6 226.500v4"/><path d="M124.6 226.500v4"/><path d="M136.6 226.500v4"/><path d="M148.6 226.500v4"/><path d="M160.6 224.500v7"/><path d="M172.6 226.500v4"/><path d="M184.6 226.500v4"/><path d="M196.6 226.500v4"/><path d="M220.6 226.500v4"/><path d="M232.6 226.500v4"/><path d="M244.6 226.500v4"/><path d="M256.6 224.500v7"/><path d="M268.6 226.500v4"/><path d="M280.6 226.500v4"/><path d="M292.6 226.500v4"/><path d="M316.6 226.500v4"/><path d="M328.6 226.500v4"/><path d="M340.6 226.500v4"/><path d="M352.6 224.500v7"/><path d="M364.6 226.500v4"/><path d="M376.6 226.500v4"/><path d="M388.6 226.500v4"/><path d="M412.6 226.500v4"/><path d="M424.6 226.500v4"/><path d="M436.6 226.500v4"/><path d="M448.6 224.500v7"/><path d="M460.6 226.500v4"/><path d="M472.6 226.500v4"/><path d="M484.6 226.500v4"/><path d="M508.6 226.500v4"/><path d="M520.6 226.500v4"/><path d="M532.6 226.500v4"/><path d="M544.6 224.500v7"/><path d="M556.6 226.500v4"/><path d="M568.6 226.500v4"/><path d="M580.6 226.500v4"/><path d="M604.6 226.500v4"/><path d="M616.6 226.500v4"/><path d="M628.6 226.500v4"/><path d="M640.6 224.500v7"/><path d="M652.6 226.500v4"/><path d="M664.6 226.500v4"/><path d="M676.6 226.500v4"/><path d="M700.6 226.500v4"/><path d="M712.6 226.500v4"/><path d="M724.6 226.500v4"/><path d="M736.6 224.500v7"/><path d="M748.6 226.500v4"/><path d="M760.6 226.500v4"/><path d="M772.6 226.500v4"/><path d="M796.6 226.500v4"/><path d="M808.6 226.500v4"/><path d="M820.6 226.500v4"/><path d="M832.6 224.500v7"/><path d="M844.6 226.500v4"/></g><g stroke="#222" stroke-width="1" fill="none"><path d="M159.5 234v3.500M157.0 237h5"/><path d="M207.5 234v3.500M205.0 237h5"/><path d="M254.5 234v3.500M252.0 237h5"/><path d="M301.5 234v3.500M299.0 237h5"/><path d="M348.5 234v3.500M346.0 237h5"/><path d="M396.5 234v3.500M394.0 237h5"/><path d="M443.5 234v3.500M441.0 237h5"/><path d="M490.5 234v3.500M488.0 237h5"/><path d="M537.5 234v3.500M535.0 237h5"/><path d="M584.5 234v3.500M582.0 237h5"/><path d="M632.5 234v3.500M630.0 237h5"/><path d="M679.5 234v3.500M677.0 237h5"/><path d="M726.5 234v3.500M724.0 237h5"/><path d="M773.5 234v3.500M771.0 237h5"/></g></svg><span class="t" style="left:205.08px;top:223px;font:400 9.500px/1em 'Liberation Sans',sans-serif;color:#4a4a4a;">1</span><span class="t" style="left:301.32px;top:223px;font:400 9.500px/1em 'Liberation Sans',sans-serif;color:#4a4a4a;">2</span><span class="t" style="left:397.44px;top:223px;font:400 9.500px/1em 'Liberation Sans',sans-serif;color:#4a4a4a;">3</span><span class="t" style="left:493.59px;top:223px;font:400 9.500px/1em 'Liberation Sans',sans-serif;color:#4a4a4a;">4</span><span class="t" style="left:589.42px;top:223px;font:400 9.500px/1em 'Liberation Sans',sans-serif;color:#4a4a4a;">5</span><span class="t" style="left:685.33px;top:223px;font:400 9.500px/1em 'Liberation Sans',sans-serif;color:#4a4a4a;">6</span><span class="t" style="left:781.32px;top:223px;font:400 9.500px/1em 'Liberation Sans',sans-serif;color:#4a4a4a;">7</span><svg class="abs" style="left:107px;top:220px" width="11" height="18" viewBox="0 0 11 18"><path d="M.5 .5h10v3l-5 5.400 5 5.400v3h-10v-3l5-5.400-5-5.400z" fill="#e2e2e2" stroke="#000" stroke-width="1" stroke-linejoin="round"/></svg><svg class="abs" style="left:772px;top:229px" width="11" height="9" viewBox="0 0 11 9"><path d="M.5 8.500v-3l5-5 5 5v3z" fill="#e2e2e2" stroke="#000" stroke-width="1" stroke-linejoin="round"/></svg><svg class="abs" style="left:16px;top:225px" width="9" height="8" viewBox="0 0 9 8"><path d="M1.500 0v5.500h7" stroke="#000" stroke-width="2" fill="none"/></svg><div class="abs" style="left:34px;top:259px;width:819px;height:412px;background:#fff;border:1px solid #8e8e8e;border-bottom:0;box-shadow:0 0 3px rgba(0,0,0,.22)"></div><div class="abs" style="left:99px;top:336px;width:13px;height:1.200px;background:#d2d2d2"></div><div class="abs" style="left:112px;top:323px;width:1.200px;height:14px;background:#d2d2d2"></div><div class="abs" style="left:777px;top:336px;width:13px;height:1.200px;background:#d2d2d2"></div><div class="abs" style="left:776px;top:323px;width:1.200px;height:14px;background:#d2d2d2"></div><svg class="abs" style="left:0;top:0;overflow:visible" width="1" height="1"><path d="M112.500 337.500H776.500V386.500H235.500V435.500H112.500z" fill="#c1c1e1" stroke="#00008c" stroke-width="1"/></svg><span class="t" style="left:113.07px;top:341px;font:700 42.667px/1em 'Liberation Serif',serif;color:#030320;">Hello there, how are you doing</span><span class="t" style="left:113.12px;top:390px;font:700 42.667px/1em 'Liberation Serif',serif;color:#030320;">today?</span><div class="abs" style="left:880.500px;top:217px;width:15.500px;height:454px;background:#c6c6c6"></div><div class="abs sbb" style="left:880.500px;top:218px;width:14.500px;height:14.500px"></div><svg class="abs" style="left:884.500px;top:223px" width="7" height="5" viewBox="0 0 7 5"><path d="M0 3.500h6L3 0z" fill="#8c8c8c"/><path d="M.5 4.200h6" stroke="#fff" stroke-width="1"/></svg><div class="abs sbb" style="left:880.500px;top:233.500px;width:14.500px;height:163.500px"></div><div class="abs sbb" style="left:880.500px;top:656px;width:14.500px;height:14.500px"></div><svg class="abs" style="left:884.500px;top:660px" width="6" height="3" viewBox="0 0 6 3"><path d="M0 0h6L3 3z" fill="#000"/></svg><div class="abs" style="left:895.500px;top:179px;width:46.500px;height:493px;background:#c2c2c2;border-left:1px solid #8c8c8c"></div><div class="abs" style="left:896px;top:388px;width:7px;height:73px;background:#000"></div><svg class="abs" style="left:897px;top:420px" width="6" height="9" viewBox="0 0 6 9"><path d="M.5 .5v8l5-4z" fill="#b0b0b0"/></svg><svg class="abs" style="left:916.500px;top:188px" width="11" height="9" viewBox="0 0 11 9"><path d="M0 1.500h10.500M0 4.500h10.500M0 7.400h10.500" stroke="#444" stroke-width="1"/></svg><div class="abs act2" style="left:907px;top:207.500px;width:31px;height:30px"></div><svg class="abs" style="left:911.0px;top:210.0px" width="24" height="24" viewBox="0 0 24 24"><path d="M2.500 2.500h19v19h-19z" fill="#fff" stroke="#3a3a38"/><path d="M2 2h20v4h-20z" fill="#6b6b69"/><path d="M2.500 2.500h19v19h-19z" fill="none" stroke="#3a3a38"/><path d="M6 11.500h12M6 15.500h12" stroke="#3a3a38"/><circle cx="14" cy="11.500" r="1.700" fill="#1e8bcd"/><circle cx="10.500" cy="15.500" r="1.500" fill="#9ccbf0" stroke="#1e8bcd"/></svg><svg class="abs" style="left:911.0px;top:241.0px" width="24" height="24" viewBox="0 0 24 24"><path d="M2.500 17l5.300-14h1.400l5.300 14M4.500 12h8" fill="none" stroke="#3a3a38" stroke-width="1.600"/><path d="M22.500 9c.8.800.8 1.600 0 2.400l-7 7.200-2.200-2.200 7.200-7c.8-.8 1.400-.9 2-.4z" fill="#fff" stroke="#3a3a38" stroke-linejoin="round"/><path d="M13 16.500l2.500 2.500c-1 2-4.500 3-8.500 2.500 2-1 2.500-4 6-5z" fill="#4a90d9" stroke="#1c6dbf" stroke-linejoin="round"/></svg><svg class="abs" style="left:911.0px;top:272.0px" width="24" height="24" viewBox="0 0 24 24"><path d="M1.500 17.500v-15h6l2 2.500h9.500v3" fill="#fff" stroke="#ed8733" stroke-width="1.200" stroke-linejoin="round"/><path d="M1.700 17.500l2.300-9.500h19.500l-2.300 9.500z" fill="#f8db8f" stroke="#ed8733" stroke-width="1.200" stroke-linejoin="round"/><path d="M9.500 10.500h13v12h-13z" fill="#fff" stroke="#3a3a38" stroke-width="1.200"/><circle cx="13" cy="13.700" r="1.300" fill="#f8c16b" stroke="#ed8733" stroke-width=".7"/><path d="M10 22v-2l3.500-3.300 2 1.800 3-3 3.500 3.500v3z" fill="#83beec"/><path d="M10 20l3.500-3.300 2 1.800 3-3 3.500 3.500" fill="none" stroke="#1c6dbf"/></svg><svg class="abs" style="left:911.0px;top:303.0px" width="24" height="24" viewBox="0 0 24 24"><circle cx="12" cy="12" r="9.600" fill="#fff" stroke="#3a3a38" stroke-width="1.300"/><path d="M17.500 6.500l-2.600 8.400-8.400 2.600 2.600-8.400z" fill="#1e8bcd"/><circle cx="12" cy="12" r="1.600" fill="#fff"/></svg><svg class="abs" style="left:911.0px;top:334.0px" width="24" height="24" viewBox="0 0 24 24"><path d="M4.500 2.500h10l5 5v14h-15z" fill="#fff" stroke="#3a3a38" stroke-linejoin="round" stroke-width="1.200"/><path d="M14.500 2.500v5h5" fill="none" stroke="#3a3a38" stroke-width="1.200"/></svg><svg class="abs" style="left:911.0px;top:365.0px" width="24" height="24" viewBox="0 0 24 24"><path d="M2 7.500c3.500-5 11.500-5 15 0" fill="none" stroke="#3a3a38" stroke-width="1.200"/><path d="M4 3.500l1.500 1.500M10 1.500v1.800M15.500 3.500l-1.500 1.500" stroke="#3a3a38" stroke-width="0"/><circle cx="9.500" cy="7.300" r="3" fill="#fff" stroke="#1c6dbf" stroke-width="1.100"/><circle cx="9.500" cy="7.300" r="1.400" fill="#1e8bcd"/><path d="M22.500 8c.8.800.8 1.600 0 2.400l-7 7.200-2.200-2.200 7.200-7c.8-.8 1.400-.9 2-.4z" fill="#fff" stroke="#3a3a38" stroke-linejoin="round"/><path d="M13 15.500l2.500 2.500c-1 2-4.500 3-8.500 2.500 2-1 2.500-4 6-5z" fill="#4a90d9" stroke="#1c6dbf" stroke-linejoin="round"/></svg><svg class="abs" style="left:911.0px;top:396.0px" width="24" height="24" viewBox="0 0 24 24"><path d="M16.500 21.500h-12v-19h10l4.500 4.500v5" fill="#fff" stroke="#3a3a38" stroke-linejoin="round" stroke-width="1.200"/><path d="M14.500 2.500v4.500h4.500" fill="none" stroke="#3a3a38"/><path d="M7 7.500h4M7 15.500h5" stroke="#777"/><path d="M12 10h4M7 12.500h6M7 18.500h2.500" stroke="#ed8733" stroke-width="1.200"/><path d="M11 22.500l1.200-3.700 8.300-8.300 2.500 2.500-8.300 8.300z" fill="#4a90d9" stroke="#1c6dbf" stroke-width=".9" stroke-linejoin="round"/></svg><div class="abs" style="left:9.400px;top:671px;width:932.600px;height:24px;background:#c4c4c4;border-top:1px solid #8e8e8e"></div><div class="abs" style="left:39.0px;top:674px;width:1px;height:18px;background:#8e8e8e"></div><div class="abs" style="left:40.0px;top:674px;width:1px;height:18px;background:#f4f4f4"></div><div class="abs" style="left:120.0px;top:674px;width:1px;height:18px;background:#8e8e8e"></div><div class="abs" style="left:121.0px;top:674px;width:1px;height:18px;background:#f4f4f4"></div><div class="abs" style="left:309.0px;top:674px;width:1px;height:18px;background:#8e8e8e"></div><div class="abs" style="left:310.0px;top:674px;width:1px;height:18px;background:#f4f4f4"></div><div class="abs" style="left:428.0px;top:674px;width:1px;height:18px;background:#8e8e8e"></div><div class="abs" style="left:429.0px;top:674px;width:1px;height:18px;background:#f4f4f4"></div><div class="abs" style="left:519.0px;top:674px;width:1px;height:18px;background:#8e8e8e"></div><div class="abs" style="left:520.0px;top:674px;width:1px;height:18px;background:#f4f4f4"></div><div class="abs" style="left:587.0px;top:674px;width:1px;height:18px;background:#8e8e8e"></div><div class="abs" style="left:588.0px;top:674px;width:1px;height:18px;background:#f4f4f4"></div><div class="abs" style="left:616.0px;top:674px;width:1px;height:18px;background:#8e8e8e"></div><div class="abs" style="left:617.0px;top:674px;width:1px;height:18px;background:#f4f4f4"></div><div class="abs" style="left:645.0px;top:674px;width:1px;height:18px;background:#8e8e8e"></div><div class="abs" style="left:646.0px;top:674px;width:1px;height:18px;background:#f4f4f4"></div><div class="abs" style="left:678.0px;top:674px;width:1px;height:18px;background:#8e8e8e"></div><div class="abs" style="left:679.0px;top:674px;width:1px;height:18px;background:#f4f4f4"></div><div class="abs" style="left:754.0px;top:674px;width:1px;height:18px;background:#8e8e8e"></div><div class="abs" style="left:755.0px;top:674px;width:1px;height:18px;background:#f4f4f4"></div><div class="abs" style="left:897.0px;top:674px;width:1px;height:18px;background:#8e8e8e"></div><div class="abs" style="left:898.0px;top:674px;width:1px;height:18px;background:#f4f4f4"></div><svg class="abs" style="left:21.0px;top:678.0px" width="10" height="10" viewBox="0 0 10 10"><path d="M0 0h10v10h-8.500l-1.500-1.500z" fill="#e0261e"/><path d="M1.300 1.300h7.400v7.400h-6.600l-.8-.8z" fill="#fbe4e3"/><path d="M2.500 0h5v3.800h-5z" fill="#e0261e"/><path d="M3.500 1h3v2h-3z" fill="#fff"/><path d="M2.500 5.800h5v4.200h-5z" fill="#e0261e"/><path d="M4 7h2v2h-2z" fill="#fff"/></svg><span class="t" style="left:47.07px;top:679px;font:400 11.400px/1em 'Liberation Sans',sans-serif;color:#1a1a1a;letter-spacing:0.067px;">Page 1 of 1</span><span class="t" style="left:129.69px;top:679px;font:400 11.400px/1em 'Liberation Sans',sans-serif;color:#1a1a1a;letter-spacing:-0.026px;">Selected: 7 words, 37 characters</span><span class="t" style="left:317.57px;top:679px;font:400 11.400px/1em 'Liberation Sans',sans-serif;color:#1a1a1a;letter-spacing:0.083px;">Default Page Style</span><span class="t" style="left:440.27px;top:679px;font:400 11.400px/1em 'Liberation Sans',sans-serif;color:#1a1a1a;letter-spacing:-0.154px;">English (USA)</span><svg class="abs" style="left:594px;top:677px" width="18" height="13" viewBox="0 0 18 13"><path d="M1.500 4.500h8v5h-8z" fill="none" stroke="#1e8bcd" stroke-width="1.100"/><path d="M11.800 2.500h5M11.800 11.500h5M14.300 2.500v9" stroke="#333" stroke-width="1.100" fill="none"/></svg><svg class="abs" style="left:691px;top:678px" width="56" height="12" viewBox="0 0 56 12"><path d="M.5 1.500h4.500l2.500 2.500v6.500h-7z" fill="#fff" stroke="#1e8bcd" stroke-width="1.100"/><path d="M14.500 1.500h4.500l2.500 2.500v6.500h-7zM24.500 1.500h4.500l2.500 2.500v6.500h-7z" fill="#fff" stroke="#333" stroke-width="1.100"/><path d="M46 10.500h-7.500v-6.500q0-2.500 2.500-2.500h5zM46 1.500h5q2.500 0 2.500 2.500v6.500h-7.500z" fill="#fff" stroke="#333" stroke-width="1.100"/></svg><svg class="abs" style="left:760px;top:677px" width="135" height="14" viewBox="0 0 135 14"><path d="M4.300 7h9.700M121 7h9.800M125.900 2v10" stroke="#333" stroke-width="1.800"/><path d="M18.800 6.800h97.200" stroke="#111" stroke-width="1.300"/><path d="M30 4.500v5" stroke="#111" stroke-width="1.800"/><path d="M65.500 2.300h3.500v9.400h-3.500z" fill="#e4e4e4" stroke="#444"/></svg><span class="t" style="left:905.13px;top:679px;font:400 11.400px/1em 'Liberation Sans',sans-serif;color:#1a1a1a;letter-spacing:-0.628px;">100%</span>
<!-- taskbar -->
<svg class="abs" style="left:13px;top:787px" width="23" height="18" viewBox="0 0 23 18"><rect x=".5" y=".5" width="19" height="12.500" rx="1" fill="#dcdcdc" stroke="#f4f4f4"/><rect x="3" y="4" width="11" height="5" fill="#fff" stroke="#555" stroke-width=".8"/><path d="M13 8l8 8.500" stroke="#3c78c8" stroke-width="2.600" stroke-linecap="round"/><path d="M12.500 6.500l2.500 3" stroke="#ddd" stroke-width="2.200" stroke-linecap="round"/></svg><span class="t" style="left:42.60px;top:788px;font:700 13.600px/1em 'Liberation Sans',sans-serif;color:#fff;letter-spacing:0.121px;">Desktop 1</span><div class="abs tk" style="left:115px;top:779px;width:150px;height:29.500px"></div><div class="abs tk" style="left:267px;top:779px;width:150px;height:29.500px"></div><div class="abs tk" style="left:419px;top:779px;width:150px;height:29.500px"></div><div class="abs tk tka" style="left:571px;top:779px;width:150px;height:29.500px"></div><svg class="abs" style="left:162.0px;top:783.0px" width="22" height="22" viewBox="0 0 22 22"><g fill="#f02c00"><path d="M0 0h8.2v1.6h-2l4.9 7.2 4.6-7.2h-2.2V0H22v1.6h-2.4l-6.9 9.9 6.9 8.9H22V22h-8.6v-1.6h2.1l-4.6-6.6-4.6 6.6h2.3V22H0v-1.6h2.3l7-9.8L2.6 1.6H0z"/></g><path fill="#1010f4" d="M.6 8L3 4.300Q4.400 3 6 3H16Q17.600 3 19 4.300L21.400 8 20 8.400 17.800 5.800Q17 5 15.800 5H12.900V17.600Q12.900 18.800 14.800 19V20H7.200V19Q9.100 18.800 9.100 17.600V5H6.200Q5 5 4.200 5.800L2 8.400Z"/></svg><span class="t" style="left:187.85px;top:787px;font:400 13.200px/1em 'Liberation Sans',sans-serif;color:#f2f2f2;letter-spacing:0.376px;">xterm</span><svg class="abs" style="left:302.0px;top:783.0px" width="22" height="22" viewBox="0 0 22 22"><g fill="#f02c00"><path d="M0 0h8.2v1.6h-2l4.9 7.2 4.6-7.2h-2.2V0H22v1.6h-2.4l-6.9 9.9 6.9 8.9H22V22h-8.6v-1.6h2.1l-4.6-6.6-4.6 6.6h2.3V22H0v-1.6h2.3l7-9.8L2.6 1.6H0z"/></g><path fill="#1010f4" d="M.6 8L3 4.300Q4.400 3 6 3H16Q17.600 3 19 4.300L21.400 8 20 8.400 17.800 5.800Q17 5 15.800 5H12.900V17.600Q12.900 18.800 14.800 19V20H7.200V19Q9.100 18.800 9.100 17.600V5H6.200Q5 5 4.200 5.800L2 8.400Z"/></svg><span class="t" style="left:327.85px;top:787px;font:400 13.200px/1em 'Liberation Sans',sans-serif;color:#f2f2f2;letter-spacing:-0.143px;">xterm &lt;2&gt;</span><svg class="abs" style="left:454.0px;top:783.0px" width="22" height="22" viewBox="0 0 22 22"><g fill="#f02c00"><path d="M0 0h8.2v1.6h-2l4.9 7.2 4.6-7.2h-2.2V0H22v1.6h-2.4l-6.9 9.9 6.9 8.9H22V22h-8.6v-1.6h2.1l-4.6-6.6-4.6 6.6h2.3V22H0v-1.6h2.3l7-9.8L2.6 1.6H0z"/></g><path fill="#1010f4" d="M.6 8L3 4.300Q4.400 3 6 3H16Q17.600 3 19 4.300L21.400 8 20 8.400 17.800 5.800Q17 5 15.800 5H12.900V17.600Q12.900 18.800 14.800 19V20H7.200V19Q9.100 18.800 9.100 17.600V5H6.200Q5 5 4.200 5.800L2 8.400Z"/></svg><span class="t" style="left:479.85px;top:787px;font:400 13.200px/1em 'Liberation Sans',sans-serif;color:#f2f2f2;letter-spacing:-0.143px;">xterm &lt;3&gt;</span><svg class="abs" style="left:578px;top:782px" width="20" height="24" viewBox="0 0 20 24"><path d="M1 .8h12.500l5.500 5.500v16.900h-18z" fill="#fff" stroke="#1c6dbf" stroke-width="1.500" stroke-linejoin="round"/><path d="M13.500 0h6.500v6.500z" fill="#1c6dbf"/><path d="M4 10.500h3.500M4 13.500h3.500M4 16.500h12M4 19.500h9" stroke="#1e8bcd" stroke-width="1.300"/><path d="M9.500 9.500h6.500v4.500h-6.500z" fill="#bfdcf3" stroke="#1e8bcd" stroke-width="1.100"/></svg><span class="t" style="left:601.28px;top:787px;font:400 13.200px/1em 'Liberation Sans',sans-serif;color:#f2f2f2;letter-spacing:-0.266px;">Untitled 1 - LibreO...</span><span class="t" style="left:1204.77px;top:780px;font:700 13.600px/1em 'Liberation Sans',sans-serif;color:#fff;letter-spacing:0.325px;">09:30</span><span class="t" style="left:1159.94px;top:799px;font:400 11.900px/1em 'Liberation Sans',sans-serif;color:#f2f2f2;letter-spacing:0.290px;">Tuesday 05 November</span>
</div></div></body></html>
